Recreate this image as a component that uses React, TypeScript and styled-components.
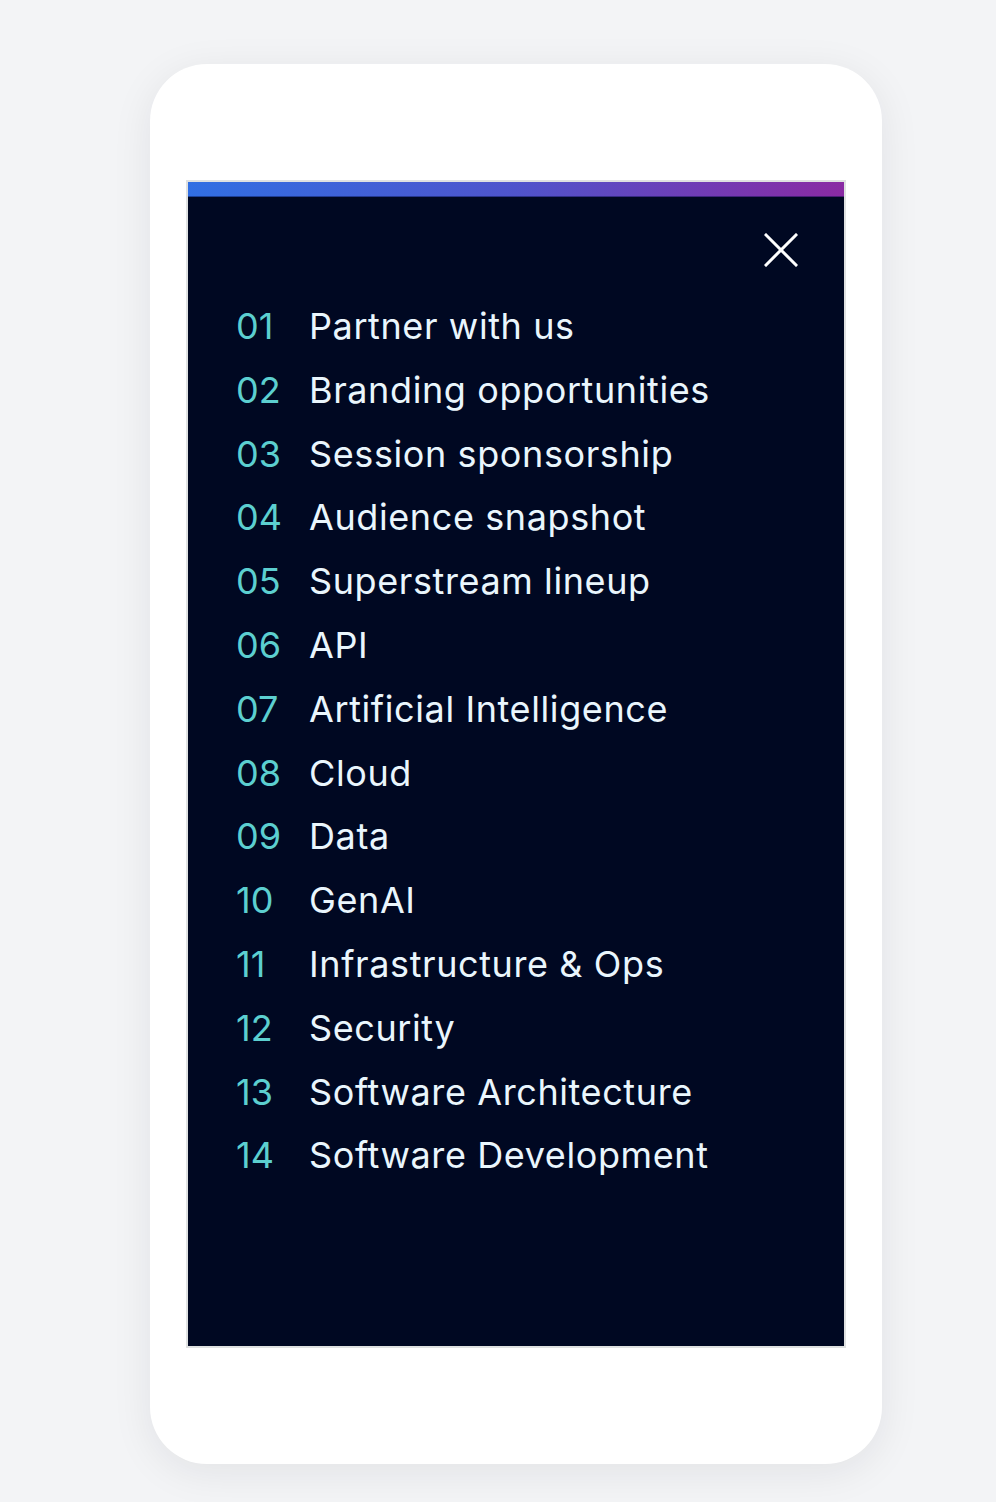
import React from 'react';
import styled, { createGlobalStyle } from 'styled-components';

const GlobalStyle = createGlobalStyle`
  html, body {
    margin: 0;
    padding: 0;
    background: #f3f4f6;
  }
  body {
    font-family: Inter, 'Liberation Sans', sans-serif;
  }
`;

const Page = styled.div`
  width: 996px;
  height: 1502px;
  padding-top: 64px;
  padding-left: 150px;
  box-sizing: border-box;
`;

const Phone = styled.div`
  width: 732px;
  height: 1400px;
  background: #ffffff;
  border-radius: 57px;
  box-shadow: 0 8px 40px rgba(20, 24, 40, 0.08);
  padding: 116px 36px 0 36px;
  box-sizing: border-box;
`;

const Menu = styled.nav`
  width: 660px;
  height: 1168px;
  box-sizing: border-box;
  border: 2px solid #dfe1e1;
  background: #000822;
  display: flex;
  flex-direction: column;
`;

const GradientBar = styled.div`
  height: 14px;
  background: linear-gradient(90deg, #316fe3 0%, #4f54cc 50%, #8a2aa3 100%);
  border-bottom: 1px solid rgba(0, 8, 60, 0.45);
`;

const TopRow = styled.div`
  display: flex;
  justify-content: flex-end;
  padding: 36px 46px 0 0;
`;

const CloseButton = styled.button`
  width: 34px;
  height: 34px;
  padding: 0;
  border: none;
  background: transparent;
  cursor: pointer;
  display: flex;
  align-items: center;
  justify-content: center;
`;

const List = styled.ol`
  list-style: none;
  margin: 0;
  padding: 28px 0 0 48px;
  display: flex;
  flex-direction: column;
`;

const Item = styled.li`
  display: flex;
  align-items: baseline;
  height: 63.8px;
  font-size: 36px;
  line-height: 63.8px;
  letter-spacing: 0.6px;
`;

const Num = styled.span`
  width: 73px;
  flex: none;
  color: #5ccfd0;
  letter-spacing: 0;
`;

const Label = styled.span`
  color: #eaf6fd;
`;

const items = [
  'Partner with us',
  'Branding opportunities',
  'Session sponsorship',
  'Audience snapshot',
  'Superstream lineup',
  'API',
  'Artificial Intelligence',
  'Cloud',
  'Data',
  'GenAI',
  'Infrastructure & Ops',
  'Security',
  'Software Architecture',
  'Software Development',
];

const App: React.FC = () => {
  return (
    <>
      <GlobalStyle />
      <Page>
        <Phone>
          <Menu>
            <GradientBar />
            <TopRow>
              <CloseButton aria-label="Close menu">
                <svg width="34" height="34" viewBox="0 0 34 34" fill="none">
                  <path d="M2 2L32 32M32 2L2 32" stroke="#ffffff" strokeWidth="3" strokeLinecap="square" />
                </svg>
              </CloseButton>
            </TopRow>
            <List>
              {items.map((label, i) => (
                <Item key={label}>
                  <Num>{String(i + 1).padStart(2, '0')}</Num>
                  <Label>{label}</Label>
                </Item>
              ))}
            </List>
          </Menu>
        </Phone>
      </Page>
    </>
  );
};

export default App;
